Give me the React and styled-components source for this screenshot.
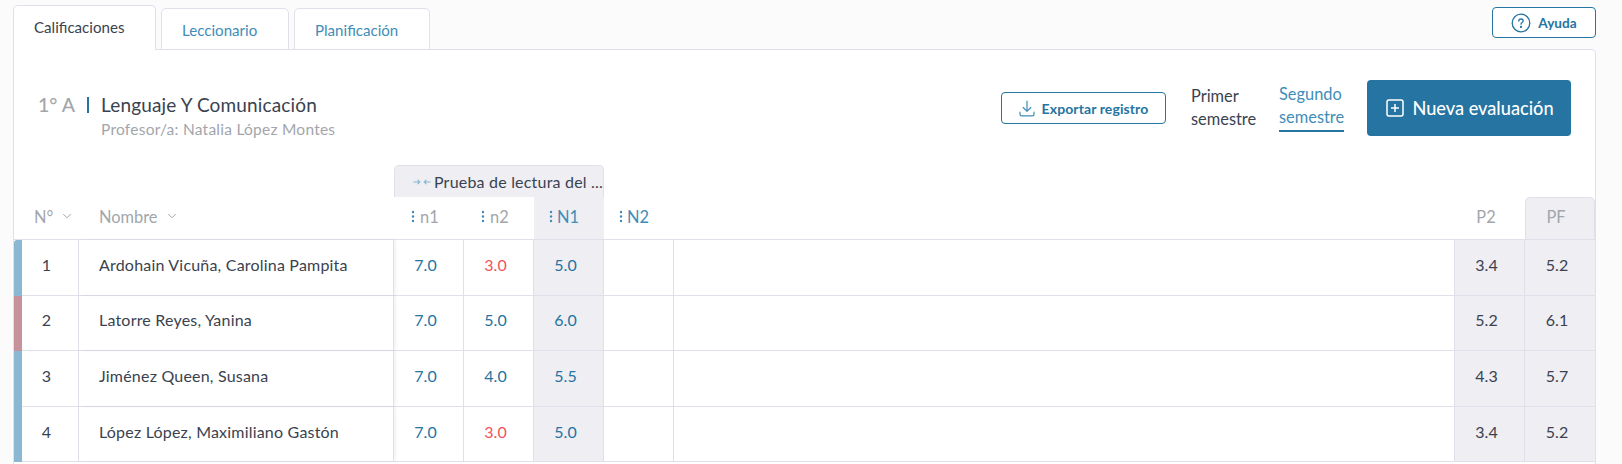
import React from "react";
import styled, { createGlobalStyle } from "styled-components";
import { ChevronDown } from "lucide-react";

const Global = createGlobalStyle`
  html, body { margin: 0; padding: 0; background: #fbfbfb; }
  body { font-family: "Lato", "Open Sans", sans-serif; color: #3a4250; overflow: hidden; }
`;

const Page = styled.div`
  width: 1622px; height: 464px; box-sizing: border-box; padding: 5px 26px 0 13px; overflow: hidden;
`;
const TopBar = styled.div`
  display: flex; justify-content: space-between; align-items: flex-start; height: 44px;
`;
const Tabs = styled.div`
  display: flex; align-items: flex-end; gap: 5px; height: 45px; position: relative; z-index: 1;
`;
const Tab = styled.div`
  box-sizing: border-box;
  width: ${p => p.$w}px;
  height: ${p => (p.$active ? 45 : 42)}px;
  background: #fff;
  border: 1px solid #e0e0ea;
  border-bottom: ${p => (p.$active ? "none" : "1px solid #e0e0ea")};
  border-radius: 5px 5px 0 0;
  font-size: 15.1px;
  color: ${p => (p.$active ? "#3a4250" : "#3f8db8")};
  padding: 12px 0 0 20px;
  line-height: 18px;
`;
const HelpButton = styled.button`
  box-sizing: border-box; width: 104px; height: 31px; margin-top: 2px;
  display: flex; align-items: center; justify-content: center; gap: 7px;
  background: #fff; border: 1px solid #2574a1; border-radius: 4px;
  color: #2574a1; font: 700 13.6px "Lato", sans-serif; padding: 0;
`;
const Panel = styled.div`
  box-sizing: border-box; height: 420px; background: #fff;
  border: 1px solid #e0e0ea; border-bottom: none; border-radius: 0 5px 0 0;
`;
const Head = styled.div`
  display: flex; align-items: center; height: 56px; margin: 30px 24px 29px 24px;
`;
const TitleBlock = styled.div`
  flex: 1; display: grid; grid-template-columns: 63px 1fr; padding-top: 16px;
`;
const Course = styled.div`
  font-size: 19.5px; line-height: 24px; color: #a2a6ab; position: relative; font-weight: 500;
  &::after { content: ""; position: absolute; left: 49px; top: 4px; width: 2px; height: 16px; background: #2574a1; }
`;
const Subject = styled.div`
  font-size: 19px; letter-spacing: 0.15px; line-height: 24px; color: #3a4250;
`;
const Teacher = styled.div`
  grid-column: 2; font-size: 15.5px; letter-spacing: 0.25px; line-height: 20px; color: #a2a6ab; margin-top: 2px;
`;
const ExportButton = styled.button`
  box-sizing: border-box; width: 165px; height: 32px; display: flex; align-items: center; justify-content: center; gap: 7px;
  background: #fff; border: 1px solid #2574a1; border-radius: 4px; color: #2574a1;
  font: 700 14px "Lato", sans-serif; letter-spacing: 0.1px; padding: 0; margin-right: 25px;
`;
const Semester = styled.div`
  font-size: 16.4px; line-height: 23px; margin-right: ${p => p.$mr}px; margin-top: -2px; width: ${p => p.$w}px;
  color: ${p => (p.$active ? "#3f8db8" : "#3a4250")};
`;
const Underlined = styled.span`
  display: inline-block; border-bottom: 2px solid #2574a1; padding-bottom: 3px; line-height: 20px;
`;
const NewButton = styled.button`
  box-sizing: border-box; width: 204px; height: 56px; display: flex; align-items: center; justify-content: center; gap: 8px;
  background: #2574a1; border: none; border-radius: 4px; color: #fff; font: 500 18.2px "Lato", sans-serif; padding: 0 0 0 2px;
`;
const COLS = "8px 57px 315px 70px 70px 70px 70px 1fr 70px 70px";
const GroupRow = styled.div`
  display: grid; grid-template-columns: 380px 210px 1fr; height: 32px;
`;
const GroupHead = styled.div`
  grid-column: 2; display: flex; align-items: center; gap: 3px; background: #eeeef3;
  border: 1px solid #e0e0ea; border-bottom: none; border-radius: 5px 5px 0 0; padding-left: 18px;
  font-size: 16px; letter-spacing: 0.2px; color: #3a4250; white-space: nowrap; overflow: hidden;
`;
const HeaderRow = styled.div`
  display: grid; grid-template-columns: ${COLS}; height: 42px; border-bottom: 1px solid #e0e0ea; box-sizing: content-box;
`;
const HCell = styled.div`
  display: flex; align-items: center; gap: ${p => p.$gap ?? 5}px; font-size: 16.4px; color: ${p => p.$color || "#a2a6ab"};
  padding: ${p => (p.$center ? "0 8px 4px 0" : `0 0 4px ${p.$pl || 0}px`)};
  justify-content: ${p => (p.$center ? "center" : "flex-start")};
  grid-column: ${p => p.$col || "auto"};
  background: ${p => (p.$grey ? "#eeeef3" : "transparent")};
  svg.chev { color: #858a92; }
`;
const PFHead = styled(HCell)`
  border: 1px solid #e0e0ea; border-bottom: none; border-radius: 5px 5px 0 0; box-sizing: border-box;
`;
const Row = styled.div`
  display: grid; grid-template-columns: ${COLS}; height: 54.6px; border-bottom: 1px solid #e0e0ea;
`;
const Strip = styled.div`
  background: ${p => (p.$late ? "#c8929a" : "#8ab8d2")};
  border-radius: ${p => (p.$first ? "3px 0 0 0" : 0)};
  margin-bottom: -1px;
`;
const NumCell = styled.div`
  display: flex; align-items: center; justify-content: center; font-size: 16px; padding: 0 7px 6px 0;
  border-right: 1px solid #e0e0ea;
`;
const NameCell = styled.div`
  display: flex; align-items: center; padding: 0 0 6px 20px; font-size: 16px; letter-spacing: 0.2px; white-space: nowrap;
  border-right: 1px solid #e0e0ea; box-shadow: 2px 0 3px rgba(0,0,0,0.05); position: relative;
`;
const Grade = styled.div`
  display: flex; align-items: center; justify-content: center; font-size: 16px; padding: 0 6px 6px 0;
  color: ${p => p.$color || "#2574a1"}; border-right: ${p => (p.$noBorder ? "none" : "1px solid #e0e0ea")};
  background: ${p => (p.$grey ? "#eeeef3" : "transparent")};
`;
const Filler = styled.div``;

const Dots = () => (
  <svg width="4" height="13" viewBox="0 0 4 13" fill="#3f8db8">
    <circle cx="2" cy="2" r="1.2" /><circle cx="2" cy="6.5" r="1.2" /><circle cx="2" cy="11" r="1.2" />
  </svg>
);
const Collapse = () => (
  <svg width="21" height="10" viewBox="0 0 21 10" fill="none" stroke="#7fb2d0" strokeWidth="1.2" strokeLinecap="round" strokeLinejoin="round">
    <path d="M1 5h7M5.7 2.7 8 5 5.7 7.3" /><path d="M20 5h-7M15.3 2.7 13 5l2.3 2.3" />
  </svg>
);
const HelpIcon = () => (
  <svg width="20" height="20" viewBox="0 0 20 20" fill="none" stroke="#2574a1" strokeWidth="1.3">
    <circle cx="10" cy="10" r="8.8" />
    <path d="M7.8 8c0-1.3 1-2 2.2-2s2.2.8 2.2 1.9c0 1.6-2.2 1.7-2.2 3.3" strokeLinecap="round" />
    <circle cx="10" cy="13.9" r=".5" fill="#2574a1" />
  </svg>
);
const DownloadIcon = () => (
  <svg width="16" height="17" viewBox="0 0 16 17" fill="none" stroke="#3f8db8" strokeWidth="1.2" strokeLinecap="round" strokeLinejoin="round">
    <path d="M8 1v10M4.2 7.5 8 11.3l3.8-3.8" />
    <path d="M1 12v2.2c0 .9.7 1.6 1.6 1.6h10.8c.9 0 1.6-.7 1.6-1.6V12" />
  </svg>
);
const PlusIcon = () => (
  <svg width="18" height="18" viewBox="0 0 18 18" fill="none" stroke="#fff" strokeWidth="1.5">
    <rect x="1" y="1" width="16" height="16" rx="2" />
    <path d="M9 5v8M5 9h8" />
  </svg>
);

const students = [
  { n: 1, name: "Ardohain Vicuña, Carolina Pampita", a: "7.0", b: "3.0", c: "5.0", p2: "3.4", pf: "5.2" },
  { n: 2, name: "Latorre Reyes, Yanina", a: "7.0", b: "5.0", c: "6.0", p2: "5.2", pf: "6.1", late: true },
  { n: 3, name: "Jiménez Queen, Susana", a: "7.0", b: "4.0", c: "5.5", p2: "4.3", pf: "5.7" },
  { n: 4, name: "López López, Maximiliano Gastón", a: "7.0", b: "3.0", c: "5.0", p2: "3.4", pf: "5.2" },
];
const gradeColor = v => (parseFloat(v) < 4 ? "#f2545b" : "#2574a1");

export default function App() {
  return (
    <Page>
      <Global />
      <TopBar>
        <Tabs>
          <Tab $active $w={143}>Calificaciones</Tab>
          <Tab $w={128}>Leccionario</Tab>
          <Tab $w={136}>Planificación</Tab>
        </Tabs>
        <HelpButton><HelpIcon />Ayuda</HelpButton>
      </TopBar>
      <Panel>
        <Head>
          <TitleBlock>
            <Course>1° A</Course>
            <Subject>Lenguaje Y Comunicación</Subject>
            <Teacher>Profesor/a: Natalia López Montes</Teacher>
          </TitleBlock>
          <ExportButton><DownloadIcon />Exportar registro</ExportButton>
          <Semester $w={70} $mr={18}>Primer<br />semestre</Semester>
          <Semester $active $w={65} $mr={23}>Segundo<br /><Underlined>semestre</Underlined></Semester>
          <NewButton><PlusIcon />Nueva evaluación</NewButton>
        </Head>
        <GroupRow>
          <GroupHead><Collapse />Prueba de lectura del ...</GroupHead>
        </GroupRow>
        <HeaderRow>
          <HCell $col="1 / 3" $pl={20} $gap={7}>N° <ChevronDown className="chev" size={14} strokeWidth={1.3} /></HCell>
          <HCell $pl={20} $gap={7}>Nombre <ChevronDown className="chev" size={14} strokeWidth={1.3} /></HCell>
          <HCell $pl={17}><Dots />n1</HCell>
          <HCell $pl={17}><Dots />n2</HCell>
          <HCell $pl={15} $gap={4} $grey $color="#3f8db8"><Dots />N1</HCell>
          <HCell $pl={15} $gap={4} $color="#3f8db8"><Dots />N2</HCell>
          <Filler />
          <HCell $center>P2</HCell>
          <PFHead $center $grey>PF</PFHead>
        </HeaderRow>
        {students.map((s, i) => (
          <Row key={s.n}>
            <Strip $late={s.late} $first={i === 0} />
            <NumCell>{s.n}</NumCell>
            <NameCell>{s.name}</NameCell>
            <Grade>{s.a}</Grade>
            <Grade $color={gradeColor(s.b)}>{s.b}</Grade>
            <Grade $grey>{s.c}</Grade>
            <Grade />
            <Grade />
            <Grade $grey $color="#3a4250">{s.p2}</Grade>
            <Grade $grey $color="#3a4250" $noBorder>{s.pf}</Grade>
          </Row>
        ))}
      </Panel>
    </Page>
  );
}
